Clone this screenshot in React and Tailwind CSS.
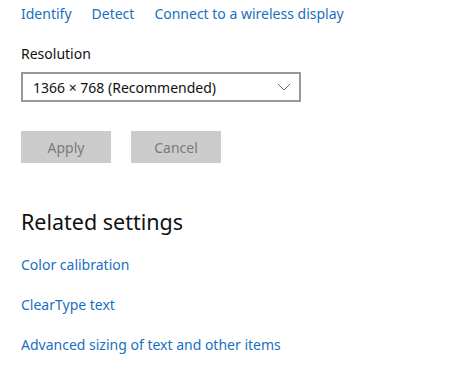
export default function App() {
  return (
    <div className="w-[452px] h-[379px] bg-white pl-[21px] font-['Noto_Sans',sans-serif] text-[14px] text-black">
      <div className="flex gap-[20px] pt-[3px] text-[#1a6fc1] leading-[22px]">
        <span>Identify</span>
        <span>Detect</span>
        <span>Connect to a wireless display</span>
      </div>

      <div className="mt-[19px] leading-[20px] text-[#111]">Resolution</div>

      <div className="mt-[8px] w-[280px] h-[30px] border-2 border-[#999] flex items-center justify-between pl-[10px] pr-[8px]">
        <span className="text-[#111]">1366 × 768 (Recommended)</span>
        <svg width="14" height="8" viewBox="0 0 14 8" fill="none" stroke="#666" strokeWidth="1">
          <path d="M1 1l6 6 6-6" />
        </svg>
      </div>

      <div className="mt-[29px] flex gap-[20px]">
        <div className="w-[90px] h-[32px] bg-[#cccccc] text-[#7a7a7a] flex items-center justify-center">Apply</div>
        <div className="w-[90px] h-[32px] bg-[#cccccc] text-[#7a7a7a] flex items-center justify-center">Cancel</div>
      </div>

      <div className="mt-[44px] text-[21.5px] leading-[30px] text-[#111]">Related settings</div>

      <div className="mt-[17px] flex flex-col gap-[18px] text-[#1a6fc1] leading-[22px]">
        <span>Color calibration</span>
        <span>ClearType text</span>
        <span>Advanced sizing of text and other items</span>
      </div>
    </div>
  )
}
